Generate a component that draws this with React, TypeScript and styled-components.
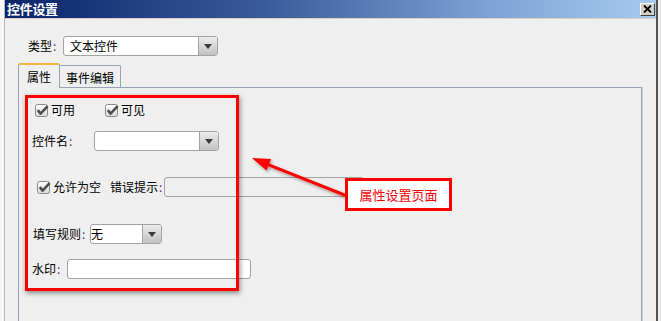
import styled, { createGlobalStyle } from 'styled-components';

const GlobalStyle = createGlobalStyle`
  html, body {
    margin: 0;
    padding: 0;
    overflow: hidden;
    background: #efefef;
  }
  body {
    font-family: "Noto Sans CJK SC", "Noto Sans", sans-serif;
    font-size: 12px;
    color: #000;
  }
`;

const Checkbox = () => (
  <svg width="14" height="13" viewBox="0 0 14 13">
    <defs>
      <linearGradient id="cbg" x1="0" y1="0" x2="0" y2="1">
        <stop offset="0" stopColor="#ffffff" />
        <stop offset="1" stopColor="#d9d9d9" />
      </linearGradient>
    </defs>
    <rect x="0.5" y="0.5" width="12" height="12" rx="2" fill="url(#cbg)" stroke="#8a8a8a" />
    <path d="M2.8 6.2 L5.6 9.6 L12.6 2.2" fill="none" stroke="#4d4d4d" strokeWidth="2.6" strokeLinejoin="round" />
  </svg>
);

const ComboBox = ({ width, value, pad = 6 }: { width: number; value?: string; pad?: number }) => (
  <SCombo $w={width}>
    <SComboText $pad={pad}>{value}</SComboText>
    <SComboButton>
      <STriangle />
    </SComboButton>
  </SCombo>
);

const Label = ({ text, width, indent = 0 }: { text: string; width: number; indent?: number }) => (
  <SLabel $w={width} $indent={indent}>
    {text}
    <SColon>:</SColon>
  </SLabel>
);

const App = () => {
  return (
    <>
      <GlobalStyle />
      <SRoot>
        <SSideStrip />
        <SWindow>
          <STitleBar>
            <STitle>控件设置</STitle>
            <SCloseButton>
              <svg width="9" height="8" viewBox="0 0 9 8">
                <path d="M1 0.5 L8 7.5 M8 0.5 L1 7.5" stroke="#000" strokeWidth="1.8" />
              </svg>
            </SCloseButton>
          </STitleBar>
          <SBody>
            <STypeRow>
              <Label text="类型" width={35} />
              <ComboBox width={155} value="文本控件" />
            </STypeRow>
            <STabBar>
              <STab $active>属性</STab>
              <STab>事件编辑</STab>
            </STabBar>
            <SPanel>
              <SFormArea>
                <SRow $top={7} $h={16} $indent={3}>
                  <SCheckItem $w={70}>
                    <Checkbox />
                    <span>可用</span>
                  </SCheckItem>
                  <SCheckItem>
                    <Checkbox />
                    <span>可见</span>
                  </SCheckItem>
                </SRow>
                <SRow $top={13}>
                  <Label text="控件名" width={62} />
                  <ComboBox width={125} />
                </SRow>
                <SRow $top={26}>
                  <SCheckItem $w={73} $indent={5}>
                    <Checkbox />
                    <span>允许为空</span>
                  </SCheckItem>
                  <Label text="错误提示" width={54} />
                  <SField $w={200} $disabled />
                </SRow>
                <SRow $top={27}>
                  <Label text="填写规则" width={57} indent={1} />
                  <ComboBox width={72} value="无" pad={0} />
                </SRow>
                <SRow $top={15}>
                  <Label text="水印" width={35} />
                  <SField $w={184} />
                </SRow>
              </SFormArea>
              <SArrow width="110" height="56" viewBox="0 0 110 56">
                <defs>
                  <filter id="ash" x="-20%" y="-40%" width="140%" height="180%">
                    <feDropShadow dx="1.5" dy="2" stdDeviation="1.5" floodColor="#000" floodOpacity="0.35" />
                  </filter>
                </defs>
                <g filter="url(#ash)">
                  <path d="M20 13.3 L102 46" stroke="#ff0000" strokeWidth="3" />
                  <path d="M7 8 L26.2 9 L21.4 20.6 Z" fill="#ff0000" />
                </g>
              </SArrow>
              <SCallout>属性设置页面</SCallout>
            </SPanel>
          </SBody>
        </SWindow>
        <SEdgeStrip />
      </SRoot>
    </>
  );
};

const SRoot = styled.div`
  display: flex;
  width: 661px;
  height: 321px;
  overflow: hidden;
`;

const SSideStrip = styled.div`
  width: 4px;
  flex-shrink: 0;
  background: #f7f7f7;
  border-right: 1px solid #b9b9b9;
`;

const SEdgeStrip = styled.div`
  width: 3px;
  flex-shrink: 0;
  background: #ebebeb;
`;

const SWindow = styled.div`
  flex: 1;
  display: flex;
  flex-direction: column;
  background: #efefef;
  border-right: 2px solid #555;
  min-width: 0;
`;

const STitleBar = styled.div`
  height: 18px;
  display: flex;
  align-items: center;
  justify-content: space-between;
  padding: 0 0 0 2px;
  background: linear-gradient(to right, #0a246a 0%, #3a5b9a 40%, #7ea4d6 75%, #a6caf0 100%);
  border-bottom: 1px solid #d8d2c4;
  flex-shrink: 0;
`;

const STitle = styled.span`
  color: #fff;
  font-weight: bold;
  font-size: 13px;
  line-height: 18px;
  letter-spacing: -0.3px;
`;

const SCloseButton = styled.div`
  width: 15px;
  height: 13px;
  box-sizing: border-box;
  display: flex;
  align-items: center;
  justify-content: center;
  background: #d4d0c8;
  border-top: 1px solid #fff;
  border-left: 1px solid #fff;
  border-right: 1px solid #404040;
  border-bottom: 1px solid #404040;
  margin-right: 1px;
`;

const SBody = styled.div`
  flex: 1;
  display: flex;
  flex-direction: column;
  padding: 0 14px 0 13px;
  min-height: 0;
`;

const STypeRow = styled.div`
  display: flex;
  align-items: center;
  margin-top: 17px;
  padding-left: 10px;
  height: 20px;
`;

const SLabel = styled.span<{ $w: number; $indent: number }>`
  display: inline-block;
  width: ${p => p.$w}px;
  margin-left: ${p => p.$indent}px;
  flex-shrink: 0;
  line-height: 16px;
  white-space: nowrap;
`;

const SColon = styled.span`
  color: #6a2a80;
  margin-left: 1px;
`;

const SCombo = styled.div<{ $w: number }>`
  display: flex;
  width: ${p => p.$w}px;
  height: 20px;
  box-sizing: border-box;
  border: 1px solid #a3a3a3;
  border-radius: 3px;
  background: #fff;
  overflow: hidden;
  flex-shrink: 0;
`;

const SComboText = styled.div<{ $pad: number }>`
  flex: 1;
  padding-left: ${p => p.$pad}px;
  line-height: 18px;
  font-size: 12px;
  white-space: nowrap;
  overflow: hidden;
`;

const SComboButton = styled.div`
  width: 18px;
  display: flex;
  align-items: center;
  justify-content: center;
  border-left: 1px solid #a3a3a3;
  background: linear-gradient(#ebebeb, #c2c2c2);
`;

const STriangle = styled.div`
  width: 0;
  height: 0;
  border-left: 4px solid transparent;
  border-right: 4px solid transparent;
  border-top: 5px solid #3a3a3a;
  margin-top: 1px;
`;

const STabBar = styled.div`
  display: flex;
  align-items: flex-end;
  margin-top: 7px;
  position: relative;
  z-index: 1;
`;

const STab = styled.div<{ $active?: boolean }>`
  box-sizing: border-box;
  height: ${p => (p.$active ? 25 : 22)}px;
  margin-bottom: ${p => (p.$active ? -1 : 0)}px;
  padding: ${p => (p.$active ? '1px 8px 0' : '2px 6px 0')};
  display: flex;
  align-items: center;
  background: #efefef;
  border: 1px solid #98a2b5;
  border-bottom: none;
  border-top: ${p => (p.$active ? '2px solid #f2b53a' : '1px solid #98a2b5')};
  border-radius: 2px 2px 0 0;
  margin-left: ${p => (p.$active ? 0 : -1)}px;
  font-size: 12px;
  line-height: 16px;
`;

const SPanel = styled.div`
  position: relative;
  flex: 1;
  border: 1px solid #98a2b5;
  border-bottom: none;
  box-shadow: 1px 0 0 #c9cfd9;
  min-height: 0;
`;

const SFormArea = styled.div`
  position: relative;
  width: 214px;
  height: 196px;
  box-sizing: border-box;
  margin: 7px 0 0 6px;
  padding-left: 7px;
  display: flex;
  flex-direction: column;

  &::after {
    content: '';
    position: absolute;
    inset: 0;
    border: 3px solid #ff0000;
    box-shadow: 1px 2px 5px rgba(0, 0, 0, 0.45);
    pointer-events: none;
    z-index: 2;
  }
`;

const SRow = styled.div<{ $top: number; $h?: number; $indent?: number }>`
  display: flex;
  align-items: center;
  margin-top: ${p => p.$top}px;
  height: ${p => p.$h ?? 20}px;
  padding-left: ${p => p.$indent ?? 0}px;
  flex-shrink: 0;
`;

const SCheckItem = styled.div<{ $w?: number; $indent?: number }>`
  display: flex;
  align-items: center;
  gap: 2px;
  width: ${p => (p.$w ? `${p.$w}px` : 'auto')};
  margin-left: ${p => p.$indent ?? 0}px;
  flex-shrink: 0;
  line-height: 16px;

  svg {
    flex-shrink: 0;
  }
`;

const SField = styled.div<{ $w: number; $disabled?: boolean }>`
  width: ${p => p.$w}px;
  height: 20px;
  box-sizing: border-box;
  border: 1px solid #a3a3a3;
  border-radius: 3px;
  background: ${p => (p.$disabled ? '#efefef' : '#fff')};
  flex-shrink: 0;
`;

const SArrow = styled.svg`
  position: absolute;
  left: 226px;
  top: 62px;
  z-index: 3;
  overflow: visible;
`;

const SCallout = styled.div`
  position: absolute;
  left: 326px;
  top: 90px;
  width: 107px;
  height: 33px;
  box-sizing: border-box;
  border: 3px solid #ff0000;
  background: #fff;
  color: #ff0000;
  font-size: 13px;
  line-height: 27px;
  text-align: center;
  z-index: 4;
`;

export default App;
